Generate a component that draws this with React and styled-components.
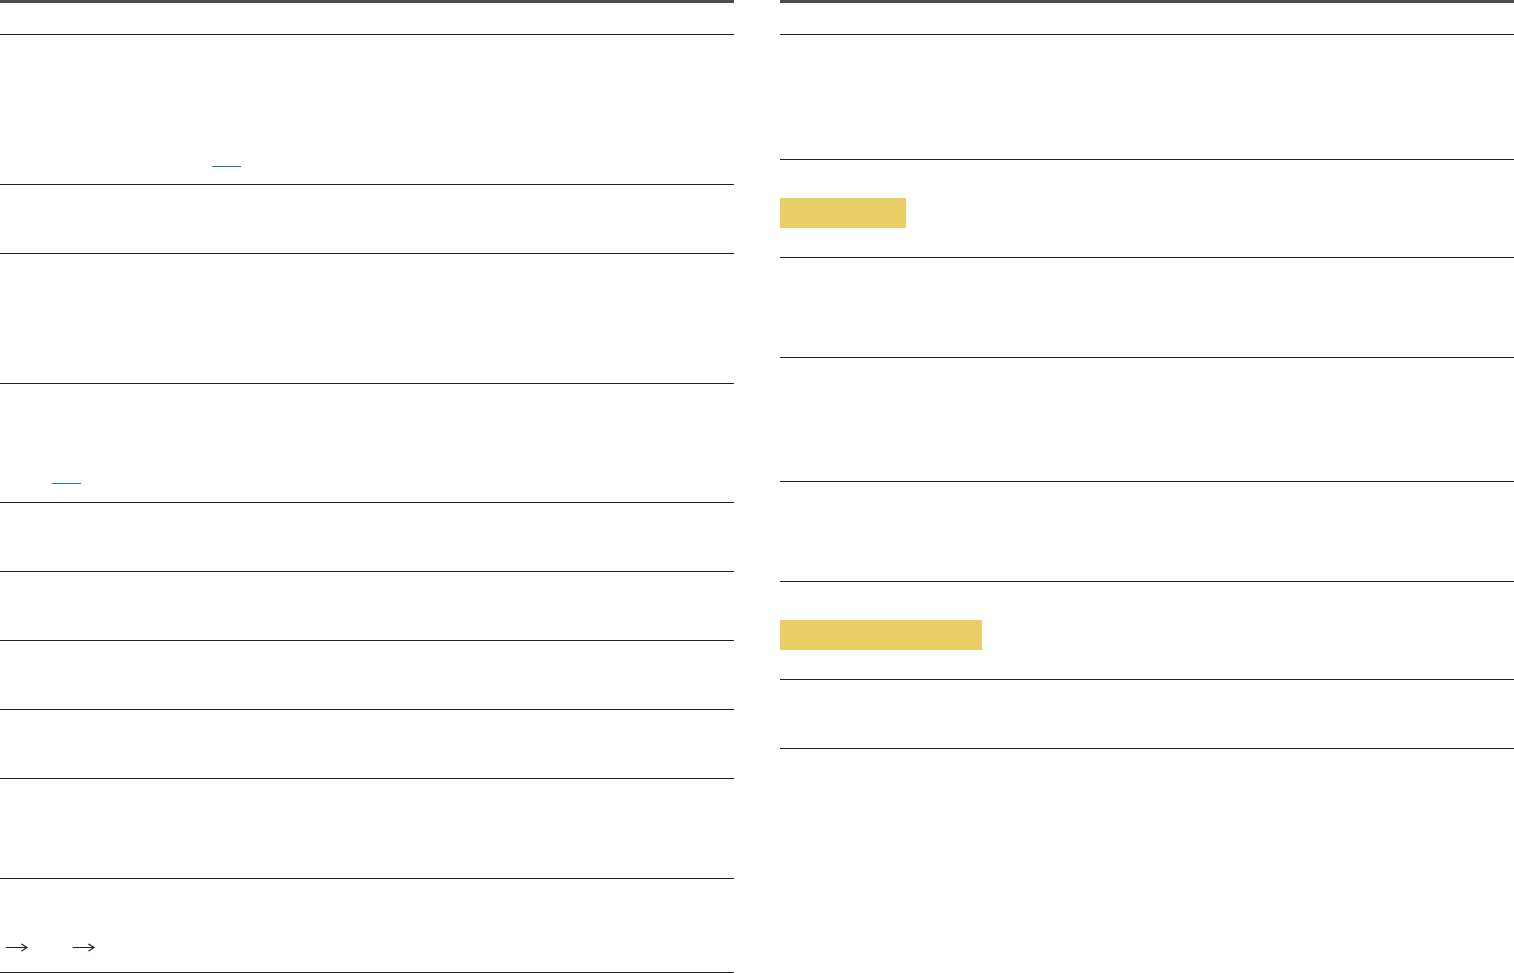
import styled, { createGlobalStyle } from "styled-components";

const GlobalStyle = createGlobalStyle`
  body {
    margin: 0;
    background: #ffffff;
    font-family: "DejaVu Sans", sans-serif;
  }
`;

const leftRows = [
  { h: 150, link: { left: 212, top: 131 } },
  { h: 69 },
  { h: 130 },
  { h: 119, link: { left: 52, top: 99 } },
  { h: 69 },
  { h: 69 },
  { h: 69 },
  { h: 69 },
  { h: 100 },
  { h: 94, arrows: true },
];

const rightRows = [
  { h: 125 },
  { h: 98, tag: 126 },
  { h: 100 },
  { h: 124 },
  { h: 100 },
  { h: 98, tag: 202 },
  { h: 69 },
];

export default function App() {
  return (
    <>
      <GlobalStyle />
      <Page>
        <Column>
          <Header />
          {leftRows.map((row, i) => (
            <Row key={i} $h={row.h}>
              {row.link && (
                <Link $left={row.link.left} $top={row.link.top} href="#">
                  {"\u00a0"}
                </Link>
              )}
              {row.arrows && (
                <Arrows>
                  <Arrow>→</Arrow>
                  <Arrow>→</Arrow>
                </Arrows>
              )}
            </Row>
          ))}
        </Column>
        <Column>
          <Header />
          {rightRows.map((row, i) => (
            <Row key={i} $h={row.h}>
              {row.tag && <Tag $w={row.tag} />}
            </Row>
          ))}
        </Column>
      </Page>
    </>
  );
}

const Page = styled.div`
  display: grid;
  grid-template-columns: 734px 734px;
  column-gap: 46px;
  align-items: start;
`;

const Column = styled.section`
  display: flex;
  flex-direction: column;
  border-top: 3px solid #4d4d4f;
`;

const Header = styled.div`
  height: 32px;
  box-sizing: border-box;
  border-bottom: 1px solid #231f20;
`;

const Row = styled.div`
  height: ${(p) => p.$h}px;
  box-sizing: border-box;
  border-bottom: 1px solid #231f20;
  display: flex;
  flex-direction: column;
  align-items: flex-start;
`;

const Link = styled.a`
  display: block;
  width: 29px;
  height: 1px;
  margin-left: ${(p) => p.$left}px;
  margin-top: ${(p) => p.$top}px;
  background: #1f78c4;
  font-size: 0;
  overflow: hidden;
`;

const Arrows = styled.div`
  display: flex;
  gap: 48px;
  margin-top: 56px;
  margin-left: 4px;
  font-family: "DejaVu Sans", sans-serif;
  font-weight: 200;
  font-size: 20px;
  line-height: 24px;
  color: #231f20;
`;

const Arrow = styled.span`
  display: inline-block;
  width: 19px;
  transform: scaleX(1.5);
  transform-origin: left center;
`;

const Tag = styled.div`
  width: ${(p) => p.$w}px;
  height: 30px;
  margin-top: 38px;
  background: #e9cd65;
`;
